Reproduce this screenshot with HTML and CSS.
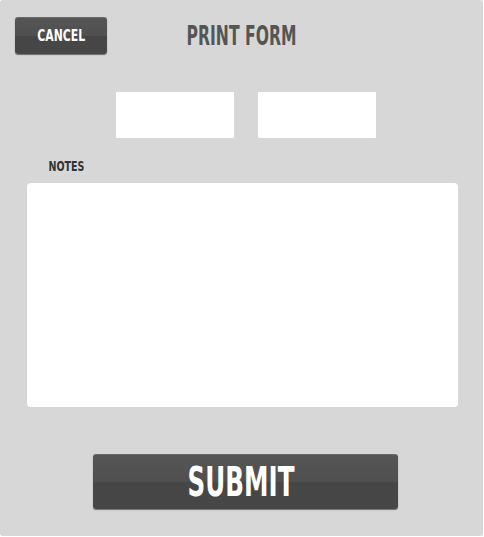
FILE: index.html
```html
<!DOCTYPE html>
<html lang="en">
<head>
  <meta charset="UTF-8">
  <title>Print Form</title>
  <link rel="stylesheet" href="styles.css">
</head>
<body>
  <div class="panel">
    <div class="header">
      <button class="btn btn-cancel"><span class="narrow">CANCEL</span></button>
      <h1 class="title"><span class="narrow narrow-tight">PRINT FORM</span></h1>
      <span></span>
    </div>
    <div class="fields">
      <input class="field" type="text">
      <input class="field" type="text">
    </div>
    <label class="label" for="notes"><span class="narrow">NOTES</span></label>
    <textarea class="notes" id="notes"></textarea>
    <div class="actions">
      <button class="btn btn-submit"><span class="narrow narrow-tight">SUBMIT</span></button>
    </div>
  </div>
</body>
</html>
```

FILE: styles.css
```css
body {
  margin: 0;
  background: #fff;
  font-family: "DejaVu Sans", sans-serif;
}

.narrow {
  display: inline-block;
  transform: scaleX(0.68);
  white-space: nowrap;
}

.narrow-tight {
  transform: scaleX(0.6);
}

.panel {
  width: 483px;
  height: 536px;
  background: #d7d7d7;
  border-radius: 3px;
  box-sizing: border-box;
  padding-top: 17px;
}

.header {
  display: grid;
  grid-template-columns: 1fr auto 1fr;
  align-items: center;
  padding: 0 15px;
}

.title {
  margin: 0;
  font-size: 26px;
  font-weight: bold;
  color: #555;
  text-align: center;
}

.btn {
  border: none;
  border-radius: 3px;
  color: #fff;
  font-family: inherit;
  font-weight: bold;
  background: linear-gradient(#565656 0%, #4f4f4f 50%, #464646 52%, #474747 100%);
  box-shadow: 0 1px 1px rgba(0, 0, 0, 0.5), inset 0 1px 0 rgba(255, 255, 255, 0.12);
  padding: 0;
}

.btn-cancel {
  width: 92px;
  height: 37px;
  font-size: 16px;
}

.fields {
  display: flex;
  justify-content: center;
  gap: 24px;
  padding-left: 9px;
  margin-top: 38px;
}

.field {
  width: 118px;
  height: 46px;
  box-sizing: border-box;
  border: none;
  border-radius: 1px;
  background: #fff;
}

.label {
  display: block;
  margin: 20px 0 0 40px;
  font-size: 14px;
  font-weight: bold;
  color: #333;
}

.notes {
  display: block;
  width: 431px;
  height: 224px;
  margin: 9px 0 0 27px;
  box-sizing: border-box;
  border: none;
  border-radius: 4px;
  background: #fff;
  resize: none;
}

.actions {
  display: flex;
  padding-left: 93px;
  margin-top: 47px;
}

.btn-submit {
  width: 305px;
  height: 55px;
  padding-right: 9px;
  font-size: 41px;
}
```
